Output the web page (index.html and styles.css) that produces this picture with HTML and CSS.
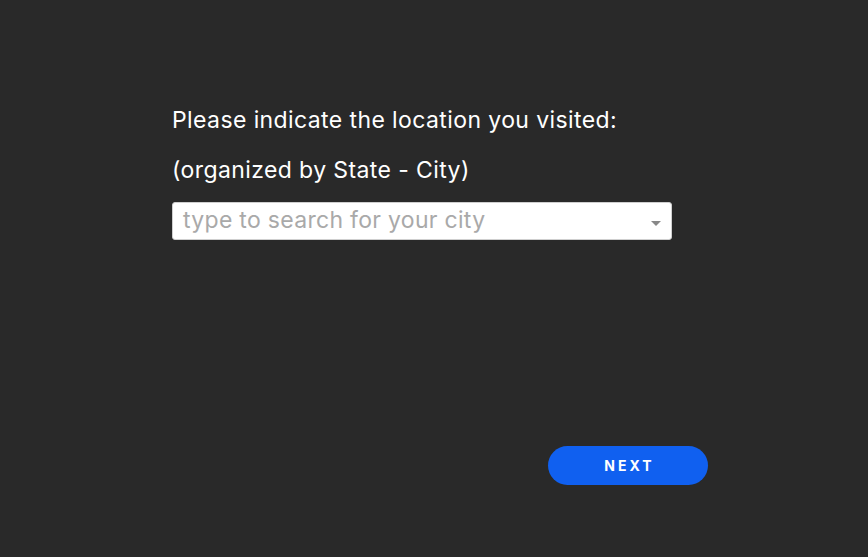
FILE: index.html
```html
<!DOCTYPE html>
<html>
<head>
<meta charset="utf-8">
<link rel="stylesheet" href="styles.css">
</head>
<body>
<main class="page">
  <section class="question">
    <p class="label">Please indicate the location you visited:</p>
    <p class="label">(organized by State - City)</p>
    <div class="select">
      <span class="placeholder">type to search for your city</span>
      <span class="caret"></span>
    </div>
  </section>
  <div class="actions">
    <button class="next">NEXT</button>
  </div>
</main>
</body>
</html>
```
FILE: styles.css
```css
html, body {
  margin: 0;
  padding: 0;
  background: #292929;
  height: 100%;
}
body {
  font-family: Inter, "Open Sans", sans-serif;
  color: #ffffff;
}
.page {
  padding: 95px 160px 0 172px;
  display: flex;
  flex-direction: column;
}
.question {
  width: 500px;
  display: flex;
  flex-direction: column;
}
.label {
  margin: 0;
  font-size: 23px;
  letter-spacing: 0.4px;
  line-height: 50px;
  white-space: nowrap;
}
.select {
  margin-top: 7px;
  height: 38px;
  box-sizing: border-box;
  background: #ffffff;
  border: 1px solid #cfcfcf;
  border-radius: 3px;
  display: flex;
  align-items: center;
  padding: 0 10px 0 10px;
}
.placeholder {
  flex: 1;
  color: #a9a9a9;
  font-size: 23px;
  letter-spacing: 0.3px;
  margin-top: -2px;
}
.caret {
  width: 0;
  height: 0;
  border-left: 5px solid transparent;
  border-right: 5px solid transparent;
  border-top: 5px solid #888888;
  margin-top: 4px;
}
.actions {
  display: flex;
  justify-content: flex-end;
  margin-top: 206px;
}
.next {
  width: 160px;
  height: 39px;
  border: none;
  border-radius: 20px;
  background: #1060f0;
  color: #ffffff;
  font-family: Inter, sans-serif;
  font-weight: 700;
  font-size: 14px;
  letter-spacing: 3px;
  padding: 0 0 1px 3px;
}
```
